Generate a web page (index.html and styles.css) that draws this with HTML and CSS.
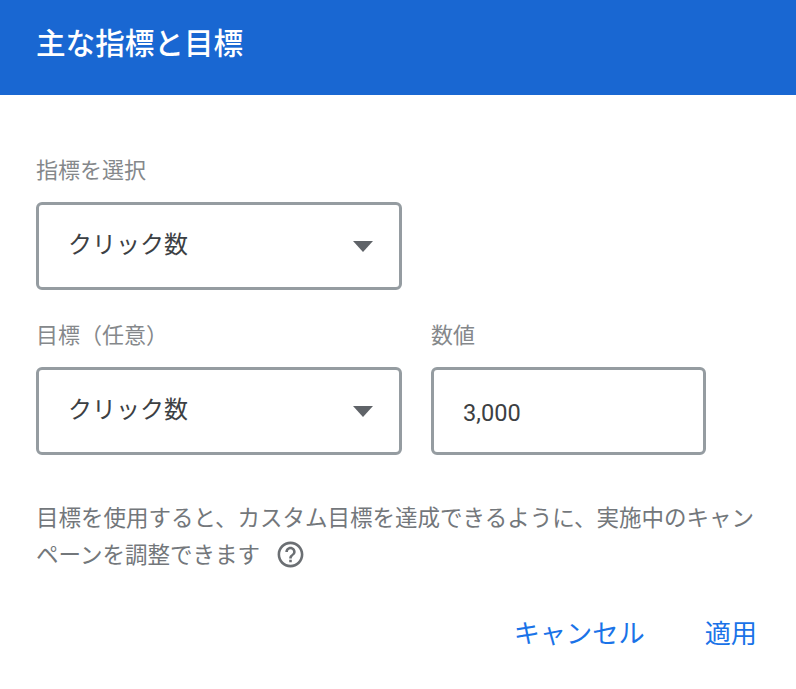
FILE: index.html
```html
<!DOCTYPE html>
<html lang="ja">
<head>
    <meta charset="UTF-8">
    <meta name="viewport" content="width=device-width, initial-scale=1.0">
    <title>主な指標と目標</title>
    <link rel="stylesheet" href="styles.css">
</head>
<body>
    <header>
        <h1>主な指標と目標</h1>
    </header>
    <main>
        <div class="row">
            <div class="field">
                <div class="label">指標を選択</div>
                <div class="box select">
                    <span>クリック数</span>
                    <svg class="arrow" viewBox="0 0 20 11"><path d="M0 0h20L10 11z"/></svg>
                </div>
            </div>
        </div>
        <div class="row">
            <div class="field">
                <div class="label">目標（任意）</div>
                <div class="box select">
                    <span>クリック数</span>
                    <svg class="arrow" viewBox="0 0 20 11"><path d="M0 0h20L10 11z"/></svg>
                </div>
            </div>
            <div class="field small">
                <div class="label">数値</div>
                <div class="box value">3,000</div>
            </div>
        </div>
        <div class="help">
            <div class="line">目標を使用すると、カスタム目標を達成できるように、実施中のキャン</div>
            <div class="line last">
                <span>ペーンを調整できます</span>
                <svg class="help-icon" viewBox="0 0 24 24"><path d="M11 18h2v-2h-2v2zm1-16C6.48 2 2 6.48 2 12s4.48 10 10 10 10-4.48 10-10S17.52 2 12 2zm0 18c-4.41 0-8-3.59-8-8s3.59-8 8-8 8 3.59 8 8-3.59 8-8 8zm0-14c-2.21 0-4 1.79-4 4h2c0-1.1.9-2 2-2s2 .9 2 2c0 2-3 1.75-3 5h2c0-2.25 3-2.5 3-5 0-2.21-1.79-4-4-4z"/></svg>
            </div>
        </div>
    </main>
    <footer>
        <button class="cancel">キャンセル</button>
        <button class="apply">適用</button>
    </footer>
</body>
</html>
```
FILE: styles.css
```css
* {
    box-sizing: border-box;
}
body {
    margin: 0;
    background: #fff;
    color: #3c4043;
    font-family: Roboto, "Noto Sans CJK JP", sans-serif;
}
header {
    height: 95px;
    padding: 23px 36px 0;
    background: #1967d2;
    color: #fff;
}
h1 {
    margin: 0;
    font-size: 29.6px;
    font-weight: 500;
    line-height: 42px;
    white-space: nowrap;
}
main {
    padding: 59px 36px 0;
}
.row {
    display: flex;
    gap: 29px;
    height: 166px;
}
.row + .row {
    height: 165px;
    margin-top: -1px;
}
.field {
    width: 366px;
}
.field.small {
    width: 275px;
}
.label {
    height: 48px;
    color: #85888b;
    font-size: 22px;
    line-height: 33px;
    white-space: nowrap;
}
.box {
    display: flex;
    align-items: center;
    height: 88px;
    padding: 0 27px 0 29px;
    border: 3px solid #959ca1;
    border-radius: 6px;
    font-size: 24px;
}
.select {
    justify-content: space-between;
    padding-right: 26px;
    padding-bottom: 7px;
}
.value {
    padding-top: 4px;
    font-size: 23.6px;
}
.arrow {
    width: 20px;
    height: 11px;
    margin-top: 7px;
    fill: #5f6368;
}
.help {
    padding-top: 13px;
    color: #73777b;
    font-size: 22.5px;
}
.line {
    display: flex;
    align-items: center;
    height: 37px;
    white-space: nowrap;
}
.help-icon {
    width: 31px;
    height: 31px;
    margin: 4px 0 0 15px;
    fill: #6b6f73;
}
footer {
    display: flex;
    justify-content: flex-end;
    gap: 60px;
    padding: 43px 39px 0 0;
}
button {
    padding: 0;
    border: 0;
    background: none;
    color: #1a73e8;
    font-family: inherit;
    font-size: 26.2px;
    font-weight: 400;
    line-height: 40px;
}
```
